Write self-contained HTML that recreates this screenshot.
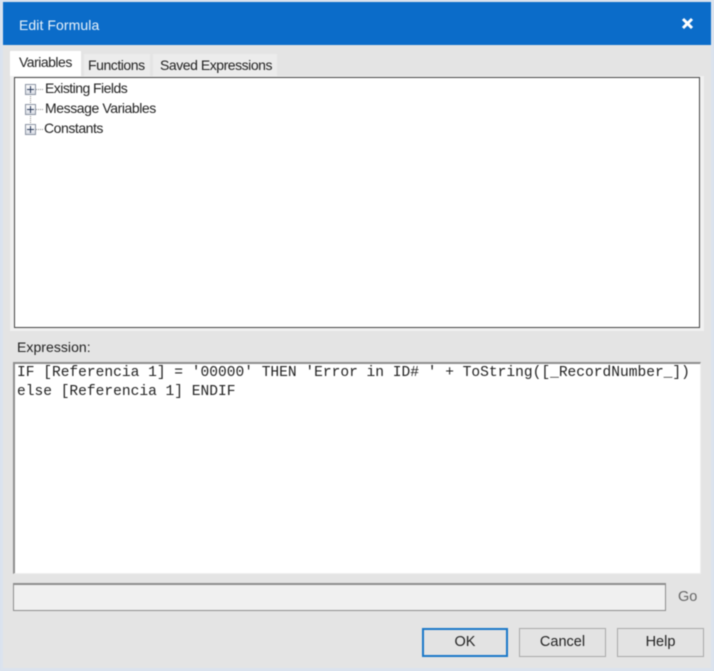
<!DOCTYPE html>
<html><head><meta charset="utf-8"><style>
html,body{margin:0;padding:0;width:714px;height:671px;overflow:hidden;background:#d9e2ee;}
div{position:absolute;box-sizing:border-box;}
.t{font-family:"Liberation Sans",sans-serif;font-size:14px;color:#222;white-space:nowrap;line-height:16px;}
.btn{top:628px;height:29px;background:#e3e3e3;border:1px solid #a9a9a9;text-align:center;font-family:"Liberation Sans",sans-serif;font-size:14.5px;line-height:27px;color:#222;}
.box{width:11px;height:11px;left:25px;border:1px solid #8b94a3;background:linear-gradient(#fff,#d9dde5);}
.box:before{content:"";position:absolute;left:1px;top:4px;width:7px;height:1px;background:#2a3a5a;}
.box:after{content:"";position:absolute;left:4px;top:1px;width:1px;height:7px;background:#2a3a5a;}
.h{left:36px;width:7px;border-top:1px dotted #888;height:1px;}
.v{left:30px;width:1px;height:10px;border-left:1px dotted #888;}
</style></head><body>
<div id="w" style="left:0;top:0;width:714px;height:671px;filter:blur(.4px);">
<div style="left:0;top:0;width:714px;height:671px;background:#dbe3ee;"></div>
<div style="left:3px;top:2px;width:708px;height:666px;background:#e4e4e4;"></div>
<div style="left:3px;top:2px;width:708px;height:43px;background:#0b6cc9;"></div>
<div class="t" style="left:19px;top:17px;color:#e8f2fb;font-size:14px;letter-spacing:.08px;">Edit Formula</div>
<svg style="position:absolute;left:681px;top:17px" width="13" height="13" viewBox="0 0 13 13"><path d="M2 2L11 11M11 2L2 11" stroke="#fff" stroke-width="3"/></svg>

<div style="left:84px;top:54px;width:66px;height:23px;background:#ececec;"></div>
<div style="left:153px;top:54px;width:124px;height:23px;background:#ececec;"></div>
<div style="left:10px;top:51px;width:71px;height:28px;background:#fff;"></div>
<div class="t" style="left:19px;top:54px;letter-spacing:-.5px;">Variables</div>
<div class="t" style="left:88px;top:57px;letter-spacing:-.45px;">Functions</div>
<div class="t" style="left:160px;top:57px;letter-spacing:-.46px;">Saved Expressions</div>

<div style="left:10px;top:76px;width:694px;height:255px;background:#f1f1f1;"></div>
<div style="left:14px;top:77px;width:686px;height:251px;background:#fff;border:1px solid #444;"></div>
<div class="v" style="top:93px;"></div><div class="v" style="top:113px;"></div>
<div class="box" style="top:84px;"></div><div class="h" style="top:89px;"></div>
<div class="box" style="top:104px;"></div><div class="h" style="top:109px;"></div>
<div class="box" style="top:124px;"></div><div class="h" style="top:129px;"></div>
<div class="t" style="left:45px;top:80px;letter-spacing:-.54px;">Existing Fields</div>
<div class="t" style="left:45px;top:100px;letter-spacing:-.42px;">Message Variables</div>
<div class="t" style="left:44px;top:120px;letter-spacing:-.45px;">Constants</div>

<div class="t" style="left:17px;top:339px;letter-spacing:.05px;">Expression:</div>
<div style="left:13px;top:362px;width:688px;height:212px;background:#fff;border:2px solid #8e8e8e;border-right:1px solid #eee;border-bottom:1px solid #eee;"></div>
<div style="left:17px;top:364px;font-family:'Liberation Mono',monospace;font-size:14.57px;line-height:19px;color:#222;white-space:pre;">IF [Referencia 1] = '00000' THEN 'Error in ID# ' + ToString([_RecordNumber_])
else [Referencia 1] ENDIF</div>

<div style="left:13px;top:583px;width:653px;height:28px;background:#f0f0f0;border:1px solid #8e8e8e;border-top:2px solid #8e8e8e;"></div>
<div class="t" style="left:678px;top:589px;color:#666;font-size:14.5px;">Go</div>

<div class="btn" style="left:422px;width:86px;border:2px solid #1a78c8;line-height:25px;">OK</div>
<div class="btn" style="left:519px;width:87px;">Cancel</div>
<div class="btn" style="left:617px;width:87px;">Help</div>
</div>
</body></html>
